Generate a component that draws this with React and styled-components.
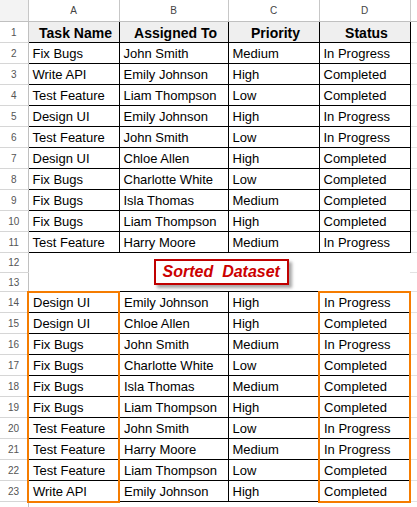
import React from "react";
import styled, { createGlobalStyle } from "styled-components";

const Global = createGlobalStyle`
  html, body { margin: 0; padding: 0; background: #fff; }
  body { font-family: "Liberation Sans", Arial, sans-serif; }
`;

const Sheet = styled.table`
  border-collapse: collapse;
  table-layout: fixed;
  width: 417px;
  font-family: "Liberation Sans", Arial, sans-serif;
  font-size: 13px;
  color: #000;
`;

const ColHead = styled.th`
  height: 21px;
  padding: 0;
  font-weight: normal;
  font-size: 10px;
  color: #444;
  background: ${(p) => (p.$corner ? "#f3f3f3" : "#fff")};
  border-right: 1px solid #c7c7c7;
  border-bottom: 1px solid #c0c0c0;
  text-align: center;
  vertical-align: middle;
`;

const Row = styled.tr`
  height: ${(p) => p.$h}px;
`;

const RowHead = styled.td`
  padding: 0;
  font-size: 10px;
  color: #555;
  text-align: center;
  vertical-align: middle;
  border-right: 1px solid #c0c0c0;
  border-bottom: 1px solid #d6d6d6;
  background: #fff;
`;

const Cell = styled.td`
  padding: 1px 0 0 4px;
  white-space: nowrap;
  overflow: hidden;
  vertical-align: middle;
  border: 1px solid #000;
  font-weight: ${(p) => (p.$head ? "bold" : "normal")};
  font-size: ${(p) => (p.$head ? "14px" : "13px")};
  text-align: ${(p) => (p.$head ? "center" : "left")};
  background: ${(p) => (p.$head ? "#efefef" : "#fff")};
  ${(p) =>
    p.$mark &&
    `
    border-left: 2px solid #f57c00;
    border-right: 2px solid #f57c00;
  `}
  ${(p) => p.$first && `border-top: 2px solid #f57c00;`}
  ${(p) => p.$last && `border-bottom: 2px solid #f57c00;`}
`;

const Filler = styled.td`
  padding: 0;
  border-bottom: 1px solid #e2e2e2;
`;

const LabelCell = styled.td`
  padding: 0;
  border: none;
  border-left: 1px solid #c0c0c0;
  text-align: center;
  vertical-align: middle;
`;

const Label = styled.div`
  display: inline-block;
  box-sizing: border-box;
  width: 135px;
  height: 26px;
  margin-left: 4px;
  border: 2px solid #c00000;
  background: #fff;
  box-shadow: 3px 3px 3px rgba(0, 0, 0, 0.35);
  color: #cc0000;
  font-weight: bold;
  font-style: italic;
  font-size: 16px;
  line-height: 22px;
  white-space: pre;
  text-align: center;
`;

const original = [
  ["Fix Bugs", "John Smith", "Medium", "In Progress"],
  ["Write API", "Emily Johnson", "High", "Completed"],
  ["Test Feature", "Liam Thompson", "Low", "Completed"],
  ["Design UI", "Emily Johnson", "High", "In Progress"],
  ["Test Feature", "John Smith", "Low", "In Progress"],
  ["Design UI", "Chloe Allen", "High", "Completed"],
  ["Fix Bugs", "Charlotte White", "Low", "Completed"],
  ["Fix Bugs", "Isla Thomas", "Medium", "Completed"],
  ["Fix Bugs", "Liam Thompson", "High", "Completed"],
  ["Test Feature", "Harry Moore", "Medium", "In Progress"],
];

const sorted = [
  ["Design UI", "Emily Johnson", "High", "In Progress"],
  ["Design UI", "Chloe Allen", "High", "Completed"],
  ["Fix Bugs", "John Smith", "Medium", "In Progress"],
  ["Fix Bugs", "Charlotte White", "Low", "Completed"],
  ["Fix Bugs", "Isla Thomas", "Medium", "Completed"],
  ["Fix Bugs", "Liam Thompson", "High", "Completed"],
  ["Test Feature", "John Smith", "Low", "In Progress"],
  ["Test Feature", "Harry Moore", "Medium", "In Progress"],
  ["Test Feature", "Liam Thompson", "Low", "Completed"],
  ["Write API", "Emily Johnson", "High", "Completed"],
];

export default function App() {
  return (
    <>
      <Global />
      <Sheet>
        <colgroup>
          <col style={{ width: 28 }} />
          <col style={{ width: 91 }} />
          <col style={{ width: 109 }} />
          <col style={{ width: 91 }} />
          <col style={{ width: 91 }} />
          <col style={{ width: 7 }} />
        </colgroup>
        <thead>
          <tr>
            <ColHead $corner />
            <ColHead>A</ColHead>
            <ColHead>B</ColHead>
            <ColHead>C</ColHead>
            <ColHead>D</ColHead>
            <ColHead />
          </tr>
        </thead>
        <tbody>
          <Row $h={21}>
            <RowHead>1</RowHead>
            <Cell $head>Task Name</Cell>
            <Cell $head>Assigned To</Cell>
            <Cell $head>Priority</Cell>
            <Cell $head>Status</Cell>
            <Filler />
          </Row>
          {original.map((r, i) => (
            <Row $h={21} key={"o" + i}>
              <RowHead>{i + 2}</RowHead>
              {r.map((c, j) => (
                <Cell key={j}>{c}</Cell>
              ))}
              <Filler />
            </Row>
          ))}
          <Row $h={20}>
            <RowHead>12</RowHead>
            <LabelCell colSpan={4} rowSpan={2}>
              <Label>{"Sorted  Dataset"}</Label>
            </LabelCell>
            <Filler />
          </Row>
          <Row $h={19}>
            <RowHead>13</RowHead>
            <Filler />
          </Row>
          {sorted.map((r, i) => (
            <Row $h={21} key={"s" + i}>
              <RowHead>{i + 14}</RowHead>
              {r.map((c, j) => {
                const mark = j === 0 || j === 3;
                return (
                  <Cell
                    key={j}
                    $mark={mark}
                    $first={mark && i === 0}
                    $last={mark && i === sorted.length - 1}
                  >
                    {c}
                  </Cell>
                );
              })}
              <Filler />
            </Row>
          ))}
          <Row $h={6}>
            <RowHead />
            <Filler colSpan={5} />
          </Row>
        </tbody>
      </Sheet>
    </>
  );
}
